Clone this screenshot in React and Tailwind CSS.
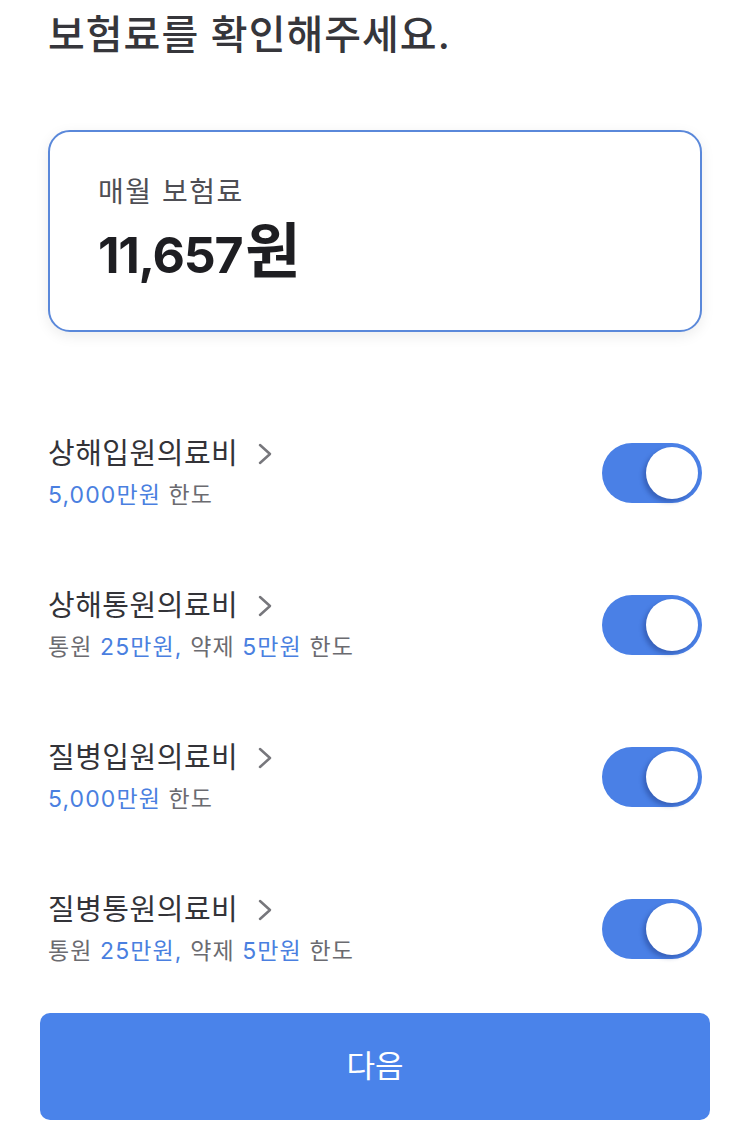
const coverages = [
  {
    name: "상해입원의료비",
    detail: [{ text: "5,000만원", blue: true }, { text: " 한도" }],
  },
  {
    name: "상해통원의료비",
    detail: [
      { text: "통원 " },
      { text: "25만원,", blue: true },
      { text: " 약제 " },
      { text: "5만원", blue: true },
      { text: " 한도" },
    ],
  },
  {
    name: "질병입원의료비",
    detail: [{ text: "5,000만원", blue: true }, { text: " 한도" }],
  },
  {
    name: "질병통원의료비",
    detail: [
      { text: "통원 " },
      { text: "25만원,", blue: true },
      { text: " 약제 " },
      { text: "5만원", blue: true },
      { text: " 한도" },
    ],
  },
];

function Toggle() {
  return (
    <div className="w-[100px] h-[60px] rounded-full bg-[#4a80e6] flex items-center justify-end pr-[4px]">
      <div className="w-[52px] h-[52px] rounded-full bg-white shadow-[-3px_3px_4px_rgba(20,40,110,0.35)]" />
    </div>
  );
}

function CoverageRow({ item }) {
  return (
    <div className="h-[152px] flex items-center justify-between">
      <div className="flex flex-col gap-[9px]">
        <div className="flex items-center">
          <span className="text-[29px] leading-[36px] tracking-[0.5px] text-[#333338]">{item.name}</span>
          <svg width="15" height="22" viewBox="0 0 15 22" className="ml-[20px]">
            <polyline
              points="2,2 12,11 2,20"
              fill="none"
              stroke="#77777c"
              strokeWidth="2.5"
              strokeLinecap="round"
              strokeLinejoin="round"
            />
          </svg>
        </div>
        <p className="text-[23px] leading-[29px] tracking-[1.1px] text-[#6b6b70]">
          {item.detail.map((d, i) => (
            <span key={i} className={d.blue ? "text-[#4a7fe0]" : ""}>
              {d.text}
            </span>
          ))}
        </p>
      </div>
      <Toggle />
    </div>
  );
}

export default function App() {
  return (
    <div
      className="w-[750px] h-[1125px] bg-white overflow-hidden"
      style={{ fontFamily: 'Inter, "Noto Sans CJK KR", sans-serif' }}
    >
      <div className="px-12 pt-[11px]">
        <h1 className="text-[40px] leading-[48px] tracking-[1px] font-medium text-[#36363b]">
          보험료를 확인해주세요.
        </h1>

        {/* premium card */}
        <div className="mt-[71px] h-[202px] border-2 border-[#5a88da] rounded-[22px] bg-white shadow-[0_4px_14px_rgba(0,0,0,0.08)] pl-[48px] pt-[43px]">
          <p className="text-[28px] leading-[35px] tracking-[1.5px] text-[#4e4e54]">매월 보험료</p>
          <p className="mt-[10px] text-[50px] leading-[62px] font-bold tracking-tight text-[#1e1e22] flex items-baseline">
            11,657<span className="text-[60px] ml-[3px]">원</span>
          </p>
        </div>

        <div className="mt-[65px]">
          {coverages.map((c) => (
            <CoverageRow key={c.name} item={c} />
          ))}
        </div>
      </div>

      <div className="px-10 mt-[8px]">
        <button className="w-full h-[107px] rounded-[10px] bg-[#4a83ea] text-white text-[31px]">
          다음
        </button>
      </div>
    </div>
  );
}
